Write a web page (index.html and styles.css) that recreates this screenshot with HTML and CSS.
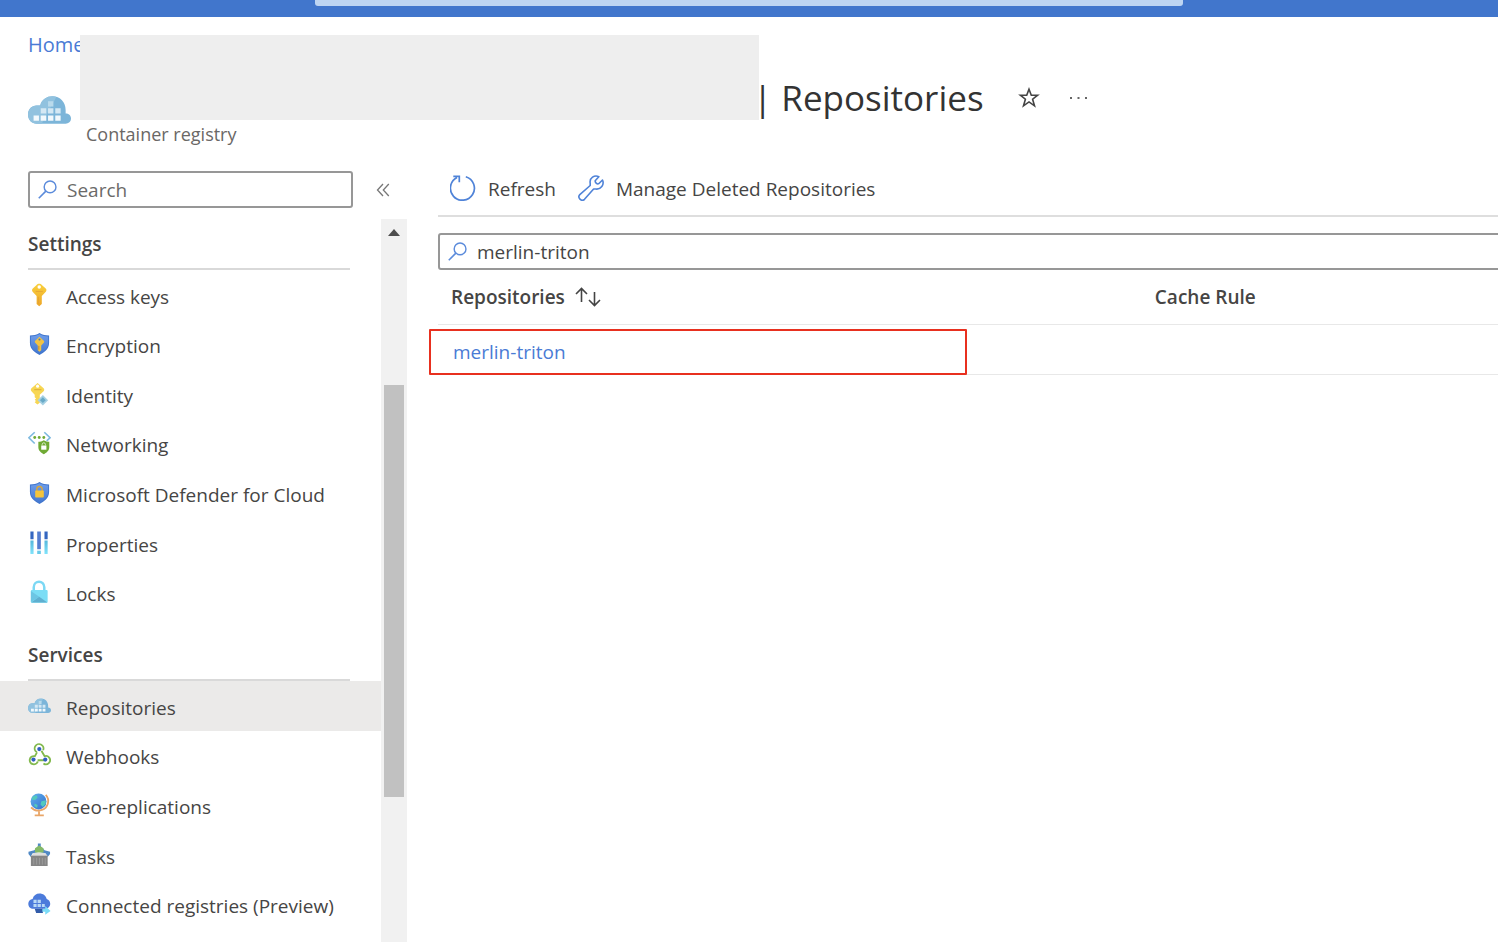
FILE: index.html
```html
<!DOCTYPE html>
<html lang="en">
<head>
<meta charset="utf-8">
<meta name="viewport" content="width=device-width, initial-scale=1">
<title>Repositories - Container registry</title>
<link rel="stylesheet" href="styles.css">
</head>
<body>
<svg class="defs" aria-hidden="true">
  <defs>
    <linearGradient id="gold" x2="0" y2="1"><stop offset="0" stop-color="#f9d03c"/><stop offset="1" stop-color="#eda629"/></linearGradient>
    <linearGradient id="shieldBlue" x2="0" y2="1"><stop offset="0" stop-color="#6f9eea"/><stop offset="1" stop-color="#4277d0"/></linearGradient>
    <linearGradient id="aqua" x2="0" y2="1"><stop offset="0" stop-color="#55b8dc"/><stop offset="1" stop-color="#82e4fb"/></linearGradient>
    <linearGradient id="globe" x2="1" y2="1"><stop offset="0" stop-color="#62b2ee"/><stop offset="1" stop-color="#316dcb"/></linearGradient>
    <symbol id="registry" viewBox="0 0 44 28">
      <path d="M9 28C4 28 0 24 0 18.500S4 9 9.500 9.300H12.500C14 3.500 19 0 25 0c8 0 13.500 6 13.500 14v3.500c3 0 5.500 2 5.500 5.200S41.500 28 38.500 28z" fill="#7cb5d9"/>
      <path d="M9 28C4 28 0 24 0 18.500S4 9 9.500 9.300H12.500C14 3.500 19 0 25 0q2 0 4 .6L14 28z" fill="#91c2df"/>
      <path d="M20.500 5h5.500v5.500h-5.500z" fill="#b9daec"/>
      <path d="M13 12.200h5.700v5.500H13zM20.500 12.200h5.500v5.500h-5.500zM27.900 12.200h5.500v5.500h-5.500z" fill="#d4e8f4"/>
      <path d="M5.700 19.600h5.500v5.500H5.700zM13 19.600h5.700v5.500H13zM20.500 19.600h5.500v5.500h-5.500zM27.900 19.600h5.500v5.500h-5.500z" fill="#f2f9fd"/>
    </symbol>
    <symbol id="magnifier" viewBox="0 0 20 20">
      <circle cx="12.700" cy="7.300" r="6.200" fill="none" stroke="#5b8bdb" stroke-width="1.500"/>
      <path d="M8.300 11.700.8 19.200" stroke="#5b8bdb" stroke-width="1.700"/>
    </symbol>
    <symbol id="shield" viewBox="0 0 24 24">
      <path d="M12 .5C9 2.500 5.500 3 2 3v8c0 6.500 5.500 10 10 12.500C16.500 21 22 17.500 22 11V3c-3.500 0-7-.5-10-2.500z" fill="#4176cd"/>
      <path d="M12 1.800c-3 1.800-5.900 2.200-9 2.300V11c0 5.800 4.800 8.900 9 11.200 4.200-2.300 9-5.400 9-11.200V4.100c-3.100-.1-6-.5-9-2.300z" fill="url(#shieldBlue)"/>
    </symbol>
  </defs>
</svg>

<header class="topbar"><div class="topbar-search"></div></header>

<div class="masthead">
  <nav aria-label="Breadcrumb"><a class="crumb" href="#">Home</a></nav>
  <div class="title-row">
    <svg class="title-icon" aria-hidden="true"><use href="#registry"/></svg>
    <h1 class="title">| Repositories</h1>
    <button class="icon-button" type="button" aria-label="Add to favorites">
      <svg width="22" height="22" viewBox="0 0 22 22" fill="none" stroke="#444" stroke-width="1.600"><path d="m11 2.200 2.300 6h6.300l-5 4 1.900 6.600-5.500-3.900-5.500 3.900 1.900-6.600-5-4h6.300z"/></svg>
    </button>
    <button class="icon-button" type="button" aria-label="More">
      <svg width="18" height="18" viewBox="0 0 18 18" fill="#666"><path d="M0 8h2v2H0zM7.500 8h2v2h-2zM15 8h2v2h-2z"/></svg>
    </button>
  </div>
  <p class="subtitle">Container registry</p>
  <div class="redaction"></div>
</div>

<div class="workspace">
  <aside class="sidebar">
    <div class="menu-search">
      <label class="field field-menu">
        <svg class="field-icon" aria-hidden="true"><use href="#magnifier"/></svg>
        <input type="text" placeholder="Search" aria-label="Search menu">
      </label>
      <button class="collapse" type="button" aria-label="Collapse menu">
        <svg width="14" height="14" viewBox="0 0 14 14" fill="none" stroke="#777" stroke-width="1.300"><path d="M7 1 1.500 7 7 13M12.800 1 7.300 7l5.500 6"/></svg>
      </button>
    </div>
    <div class="menu-scroll">
      <nav class="menu" aria-label="Resource menu">
        <h2 class="group-title">Settings</h2>
        <ul class="group group-settings">
          <li><a class="item" href="#">
            <svg class="item-icon" viewBox="0 0 24 24"><path d="M11.700.3c-1.200 0-2 .5-3 1.500L5 5.300c-1 1-1 2.200-.2 3.200L9 13v8.500l2.700 2.300L14.400 21.500V13l4.200-4.500c.9-1 .9-2.200-.1-3.200L14.700 1.800C13.700.8 12.800.3 11.700.3z" fill="url(#gold)"/><circle cx="11.700" cy="3.600" r="1.800" fill="#fff"/><path d="M8 8.300h7.500M10.900 14v7" stroke="#e3a036" stroke-width=".8"/></svg>
            Access keys</a></li>
          <li><a class="item" href="#">
            <svg class="item-icon" viewBox="0 0 24 24"><use href="#shield"/><path d="M12 4.500 7.500 8.700c-.6.600-.5 1.400 0 2L10.200 13.500v5l1.800 1.700 1.800-1.700v-5l2.700-2.800c.5-.6.600-1.400 0-2z" fill="#f2c342"/><circle cx="12" cy="7.300" r="1.100" fill="#4d76b4"/><path d="M11.300 14v4" stroke="#bf8735"/></svg>
            Encryption</a></li>
          <li><a class="item" href="#">
            <svg class="item-icon" viewBox="0 0 24 24"><path d="M10 .5 3.600 6c-.8.800-.9 2 0 3L7 12.700v2.700l1.400 1.300L7 18l1.300 1.300L7 20.600 9.800 23l2.500-2V12.700L16.300 9c.9-1 .8-2.200 0-3z" fill="#f7d653"/><circle cx="10" cy="3.800" r="1.600" fill="#fff"/><path d="M6.500 7.500h7.500" stroke="#dcae35"/><path d="m15.500 13 5.500 5.500-5.500 5.500-5.500-5.500z" fill="#a5d0e3"/><path d="m12.500 18.500 3-3 3 3-3 3z" fill="#68a9c7"/></svg>
            Identity</a></li>
          <li><a class="item" href="#">
            <svg class="item-icon" viewBox="0 0 24 24"><path d="M7 .8.900 6.500 7 12.500M17 .8l6 5.700-3.500 3.200" fill="none" stroke="#7db9df" stroke-width="1.700"/><g fill="#70aa35"><circle cx="7" cy="6.300" r="1.500"/><circle cx="11.700" cy="6.300" r="1.500"/><circle cx="16.500" cy="6.300" r="1.500"/><path d="M16.500 9c-2 1.200-3.700 1.600-5.700 1.600v5.900c0 3.800 3.200 5.900 5.700 7.200 2.500-1.300 5.700-3.400 5.700-7.200v-5.900c-2 0-3.700-.4-5.700-1.600z"/></g><path d="M13.800 14.600h5.400v4.400h-5.400z" fill="#fff"/><path d="M14.800 14.500v-1.200c0-2 3.400-2 3.400 0v1.200" fill="none" stroke="#d8eac9"/></svg>
            Networking</a></li>
          <li><a class="item" href="#">
            <svg class="item-icon" viewBox="0 0 24 24"><use href="#shield"/><path d="M9.200 10V8c0-3.800 5.600-3.800 5.600 0v2" fill="none" stroke="#d9a63c" stroke-width="1.500"/><rect x="7.500" y="9.500" width="9" height="7.200" rx=".8" fill="#f4c43b"/></svg>
            Microsoft Defender for Cloud</a></li>
          <li><a class="item" href="#">
            <svg class="item-icon" viewBox="0 0 24 24"><path d="M2.500 0h3.300v8H2.500zM17.200 0h3.300v8h-3.300z" fill="#3466c0"/><path d="M9.600 0h3.800v18.500H9.600z" fill="#547dd0"/><path d="M2.500 9.500h3.300V23.500H2.500zM17.200 9.500h3.300v14h-3.300z" fill="url(#aqua)"/><path d="M9.600 20h3.800v3.500H9.600z" fill="#68c9e9"/></svg>
            Properties</a></li>
          <li><a class="item" href="#">
            <svg class="item-icon" viewBox="0 0 24 24"><path d="M6 12V7c0-7.700 11-7.700 11 0v5" fill="none" stroke="#7cd8f4" stroke-width="2.600"/><rect x="3" y="10" width="17.500" height="13.200" rx="1" fill="#7bddf5"/><path d="m3 11 8.700 6L3 22.500z" fill="#6cc5e3"/><path d="m3.300 23 8.400-6 8.500 6z" fill="#5fafd0"/></svg>
            Locks</a></li>
        </ul>
        <h2 class="group-title group-title-next">Services</h2>
        <ul class="group group-services">
          <li><a class="item item-selected" href="#" aria-current="page">
            <svg class="item-icon" viewBox="0 0 24 24"><use href="#registry" y="4" width="24" height="15.500"/></svg>
            Repositories</a></li>
          <li><a class="item" href="#">
            <svg class="item-icon" viewBox="0 0 24 24"><g fill="none" stroke="#82b94d" stroke-width="1.900"><path d="M9.300 9.200A4.600 4.600 0 1 1 15.800 7M9.500 9 6.800 14M6.700 13.200a4.300 4.300 0 1 0 3.500 5.500M10 17.500h7M14 7.500l3.500 6M16.600 13.600a4.300 4.300 0 1 1-.5 7.200"/></g><circle cx="11.800" cy="5.800" r="2.200" fill="#315fc2"/><circle cx="5.700" cy="16.800" r="2.200" fill="#315fc2"/><circle cx="18" cy="16.800" r="2.200" fill="#315fc2"/></svg>
            Webhooks</a></li>
          <li><a class="item" href="#">
            <svg class="item-icon" viewBox="0 0 24 24"><path d="M18.500 1.500c4.800 5.200 2.500 13.500-4 15.700-4 1.400-8.500.3-11.300-2.800M11.500 18v4M7 22.800h9.500" fill="none" stroke="#e9a668" stroke-width="1.900"/><circle cx="11" cy="8.300" r="8.300" fill="url(#globe)"/><path d="M4.500 3.500 9 1.800l1 2.700-2.500 2.200L4 6.500zM14 8l4.500-1v4l-3 3-2.500-2.500zM7 10.500l3 1.500-.5 3-3-2z" fill="#53c9bd"/></svg>
            Geo-replications</a></li>
          <li><a class="item" href="#">
            <svg class="item-icon" viewBox="0 0 24 24"><path d="M10.300 0h3v3l4 4L23 8.500V11l-2.500 3-2-3.500-7-2-7 2L3 14 .5 11V8.500L6.500 7l3.800-4z" fill="#5089c5"/><path d="m11.700 2 4.500 3v4.500H7.300V5z" fill="#85ba66"/><path d="M6 10h11.500l3 3H3z" fill="#dedede"/><path d="M3 12.700h17.500V23.500H3z" fill="#858585"/><path d="M6 15v7M9 15v7M12 15v7M15 15v7M18 15v7" stroke="#9c9c9c"/></svg>
            Tasks</a></li>
          <li><a class="item" href="#">
            <svg class="item-icon" viewBox="0 0 24 24"><path d="M5.500 17C2.500 17 .3 15 .3 11.800.3 9 2.200 7 4.800 6.700 5.800 3 8.500 1 12 1c3.800 0 6.700 2.200 7.500 5.800 2.300.7 3.700 2.700 3.700 5 0 3-2.300 5.200-5.300 5.200z" fill="#4c7bdb"/><path d="M7 17h8.500v4.500H8.500z" fill="#315ba9"/><path d="M5.700 7.500H9V11H5.700zM10 7.500h3.400V11H10zM5.700 12H9v3.200H5.700zM10 12h3.400v3.200H10zM14.500 12h3v3.200h-3z" fill="#b9d9f5"/><path d="M15 17.200h3v-3l5.500 5-5.500 4v-3h-3z" fill="#7bdcf7"/></svg>
            Connected registries (Preview)</a></li>
        </ul>
      </nav>
      <div class="scrollbar" aria-hidden="true">
        <svg class="scroll-arrow" width="12" height="7" viewBox="0 0 12 7"><path d="M0 7 6 0l6 7z" fill="#4d4d4d"/></svg>
        <div class="scroll-thumb"></div>
      </div>
    </div>
  </aside>

  <main class="content">
    <div class="toolbar">
      <button class="command" type="button">
        <svg width="26" height="26" viewBox="0 0 26 26" fill="none" stroke="#4f83d8" stroke-width="1.700"><path d="M15.800 1.700A12 12 0 1 1 7 2.500M3.300 1.300h6v6"/></svg>
        Refresh</button>
      <button class="command" type="button">
        <svg width="26" height="26" viewBox="0 0 26 26" fill="none" stroke="#4f83d8" stroke-width="1.600" stroke-linejoin="round"><path d="M20.800 1.700C16.500-.4 11.200 3 12.200 8.200v2.300L1.800 19.600c-2.700 3 1.600 7.500 4.700 4.700L15.600 14h2.200c5 .7 8.800-4.400 6.700-9l-3.800 3.700c-1.500 1-4.200-1.600-3.300-3.200z"/></svg>
        Manage Deleted Repositories</button>
    </div>
    <label class="field field-filter">
      <svg class="field-icon" aria-hidden="true"><use href="#magnifier"/></svg>
      <input type="text" value="merlin-triton" aria-label="Filter repositories">
    </label>
    <table class="grid">
      <thead>
        <tr>
          <th class="col-name" scope="col"><button class="sort" type="button">Repositories
            <svg width="26" height="20" viewBox="0 0 26 20" fill="none" stroke="#444" stroke-width="1.600"><path d="M6.500 15V1.500M1 7l5.500-5.500L12 7M19.500 5v13.500M14 13l5.500 5.500L25 13"/></svg></button></th>
          <th scope="col">Cache Rule</th>
        </tr>
      </thead>
      <tbody>
        <tr>
          <td class="cell-marked"><a class="repo" href="#">merlin-triton</a></td>
          <td></td>
        </tr>
      </tbody>
    </table>
  </main>
</div>
</body>
</html>
```
FILE: styles.css
```css
*,
*::after {
  box-sizing: border-box;
}

body {
  margin: 0;
  height: 100vh;
  display: flex;
  flex-direction: column;
  overflow: hidden;
  background: #fff;
  color: #464544;
  font: 19px/26px "Open Sans", "Noto Sans", sans-serif;
}

button,
input {
  padding: 0;
  border: 0;
  background: none;
  color: inherit;
  font: inherit;
}

a {
  color: #4a7bd5;
  text-decoration: none;
}

svg {
  display: block;
  flex: none;
}

.defs {
  position: absolute;
  width: 0;
  height: 0;
}

/* Top bar */
.topbar {
  flex: none;
  height: 17px;
  background: #4176cc;
}

.topbar-search {
  width: 58%;
  height: 6px;
  margin: 0 auto;
  border-radius: 0 0 3px 3px;
  background: #bdd5f2;
}

/* Page heading */
.masthead {
  position: relative;
  flex: none;
  height: 154px;
  padding: 15px 28px 0;
}

.crumb {
  font-size: 20px;
}

.title-row {
  display: flex;
  align-items: center;
  height: 48px;
  margin-top: 16px;
}

.title-icon {
  width: 43px;
  height: 28px;
  margin: 24px 682px 0 0;
}

.title {
  margin: 0;
  font-size: 35px;
  line-height: 48px;
  font-weight: 400;
  color: #333;
}

.icon-button {
  margin-left: 30px;
}

.title + .icon-button {
  margin-left: 34px;
}

.subtitle {
  margin: 0;
  padding-left: 58px;
  font-size: 18px;
  line-height: 24px;
  color: #6a6866;
}

.redaction {
  position: absolute;
  top: 18px;
  left: 80px;
  width: 679px;
  height: 85px;
  background: #eee;
}

/* Text fields */
.field {
  display: flex;
  align-items: center;
  gap: 10px;
  height: 37px;
  padding: 0 8px;
  border: 2px solid #979797;
  border-radius: 3px;
}

.field-icon {
  width: 19px;
  height: 19px;
}

.field input {
  flex: 1;
  min-width: 0;
  outline: 0;
}

.field input::placeholder {
  color: #6b6a69;
  opacity: 1;
}

/* Resource menu */
.workspace {
  flex: 1;
  min-height: 0;
  display: flex;
}

.sidebar {
  flex: none;
  width: 407px;
  display: flex;
  flex-direction: column;
}

.menu-search {
  display: flex;
  align-items: center;
  gap: 23px;
  height: 48px;
  padding: 0 0 11px 28px;
}

.field-menu {
  width: 325px;
}

.menu-scroll {
  flex: 1;
  min-height: 0;
  display: flex;
}

.menu {
  flex: 1;
  overflow: hidden;
}

.group-title {
  height: 51px;
  margin: 0 31px 0 28px;
  padding-top: 12px;
  border-bottom: 2px solid #d9d9d9;
  font-size: 19px;
  line-height: 26px;
  font-weight: 600;
}

.group-title-next {
  margin-top: 13px;
}

.group {
  display: grid;
  grid-auto-rows: 1fr;
  margin: 0;
  padding: 0;
  list-style: none;
}

.group-settings {
  min-height: 347px;
}

.group-services {
  min-height: 248px;
}

.item {
  display: flex;
  align-items: center;
  gap: 15px;
  height: 100%;
  padding: 4px 0 0 28px;
  color: inherit;
  white-space: nowrap;
}

.item-selected {
  background: #ebeae9;
}

.item-icon {
  width: 23px;
  height: 24px;
  margin-bottom: 4px;
}

.scrollbar {
  position: relative;
  width: 26px;
  background: #f1f1f1;
}

.scroll-arrow {
  margin: 10px auto 0;
}

.scroll-thumb {
  position: absolute;
  top: 23%;
  left: 3px;
  width: 20px;
  height: 57%;
  background: #c1c1c1;
}

/* Repository list */
.content {
  flex: 1;
  min-width: 0;
  padding-left: 31px;
}

.toolbar {
  display: flex;
  gap: 22px;
  height: 46px;
  padding: 0 12px 10px;
  border-bottom: 2px solid #dedede;
}

.command {
  display: flex;
  align-items: center;
  gap: 12px;
  padding-top: 2px;
}

.command svg {
  margin-bottom: 2px;
}

.field-filter {
  margin: 16px -4px 0 0;
}

.grid {
  width: 100%;
  border-collapse: separate;
  border-spacing: 0;
  table-layout: fixed;
}

.grid th,
.grid td {
  padding: 0 13px;
  border-bottom: 1px solid #e8e8e8;
  text-align: left;
}

.grid th {
  height: 55px;
  font-weight: 600;
}

.grid td {
  height: 50px;
}

.col-name {
  width: 66.4%;
}

.sort {
  display: flex;
  align-items: center;
  gap: 10px;
  font-weight: 600;
}

.grid .cell-marked {
  position: relative;
  padding: 4px 13px 0 15px;
}

.cell-marked::after {
  content: "";
  position: absolute;
  top: 4px;
  left: -9px;
  width: 538px;
  height: 46px;
  border: 2px solid #e8301f;
  border-radius: 1px;
  pointer-events: none;
}
```
